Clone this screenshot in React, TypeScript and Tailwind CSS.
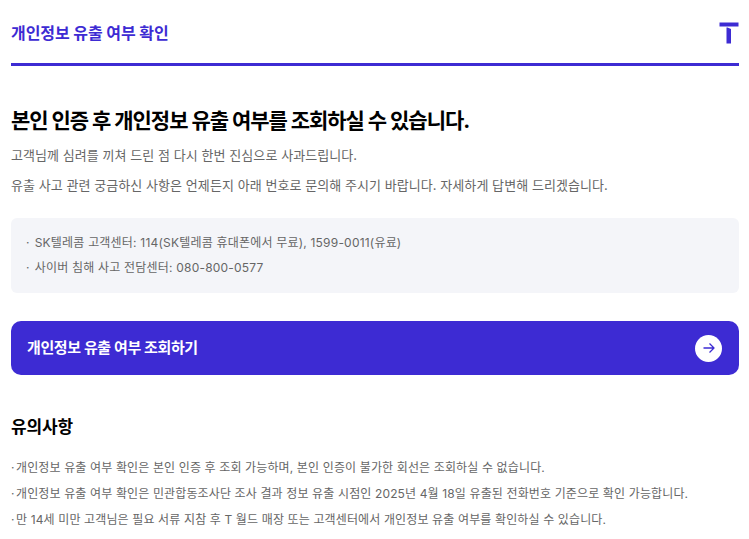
const font = "font-['Inter','Noto_Sans_CJK_KR',sans-serif]";

function Logo() {
  return (
    <svg width="20" height="22" viewBox="0 0 20 22" fill="#3d2bd3">
      <path d="M0.5 0.5H19.5V4.5H0.5Z" />
      <path d="M7.5 5.5H8.5L12 7V21.5H7.5Z" />
    </svg>
  );
}

function ArrowIcon() {
  return (
    <svg width="12" height="12" viewBox="0 0 12 12" fill="none" stroke="#3d2bd3" strokeWidth="1.3" strokeLinejoin="round">
      <path d="M0.5 6H11M6.5 1.5L11 6L6.5 10.5" />
    </svg>
  );
}

const contacts = [
  "SK텔레콤 고객센터: 114(SK텔레콤 휴대폰에서 무료), 1599-0011(유료)",
  "사이버 침해 사고 전담센터: 080-800-0577",
];

const notices = [
  "개인정보 유출 여부 확인은 본인 인증 후 조회 가능하며, 본인 인증이 불가한 회선은 조회하실 수 없습니다.",
  "개인정보 유출 여부 확인은 민관합동조사단 조사 결과 정보 유출 시점인 2025년 4월 18일 유출된 전화번호 기준으로 확인 가능합니다.",
  "만 14세 미만 고객님은 필요 서류 지참 후 T 월드 매장 또는 고객센터에서 개인정보 유출 여부를 확인하실 수 있습니다.",
];

export default function App() {
  return (
    <div className={`${font} h-[539px] overflow-hidden bg-white pr-[10px] pl-[11px]`}>
      <header className="flex h-[66px] items-center justify-between border-b-[3px] border-[#3d2bd3] pt-[3px]">
        <h1 className="text-[16px] font-bold tracking-[-0.08px] text-[#3d2bd3]">개인정보 유출 여부 확인</h1>
        <Logo />
      </header>

      <h2 className="mt-[41px] text-[21px] leading-[28px] font-bold tracking-[-1.03px] text-black">
        본인 인증 후 개인정보 유출 여부를 조회하실 수 있습니다.
      </h2>
      <p className="mt-[10px] text-[13px] leading-[20px] tracking-[0.06px] text-[#666]">고객님께 심려를 끼쳐 드린 점 다시 한번 진심으로 사과드립니다.</p>
      <p className="mt-[10px] text-[13px] leading-[20px] tracking-[0.06px] text-[#666]">
        유출 사고 관련 궁금하신 사항은 언제든지 아래 번호로 문의해 주시기 바랍니다. 자세하게 답변해 드리겠습니다.
      </p>

      <ul className="mt-[23px] flex h-[75px] flex-col justify-center gap-[5px] rounded-md bg-[#f4f5f9] pr-[16px] pl-[15px]">
        {contacts.map((c) => (
          <li key={c} className="flex gap-[5px] text-[12px] leading-[20px] tracking-[0.2px] text-[#666]">
            <span>·</span>
            <span>{c}</span>
          </li>
        ))}
      </ul>

      <button className="mt-[28px] flex h-[54px] w-full items-center justify-between rounded-[10px] bg-[#3d2bd3] pr-[17px] pl-[16px]">
        <span className="text-[15px] font-semibold tracking-[-0.42px] text-white">개인정보 유출 여부 조회하기</span>
        <span className="flex h-[27px] w-[27px] items-center justify-center rounded-full bg-white">
          <ArrowIcon />
        </span>
      </button>

      <h3 className="mt-[39px] text-[17px] leading-[26px] font-bold tracking-[-0.1px] text-black">유의사항</h3>
      <ul className="mt-[18px] flex flex-col gap-[6px]">
        {notices.map((n) => (
          <li key={n} className="flex text-[12px] leading-[20px] tracking-[0.13px] text-[#666]">
            <span className="w-[5px]">·</span>
            <span>{n}</span>
          </li>
        ))}
      </ul>
    </div>
  );
}
